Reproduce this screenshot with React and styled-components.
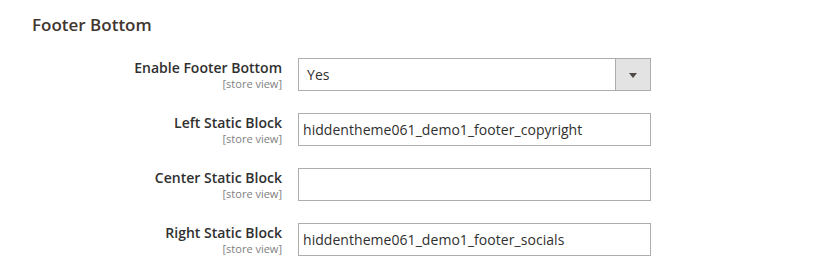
import React from 'react';
import styled, { createGlobalStyle } from 'styled-components';

const GlobalStyle = createGlobalStyle`
  body {
    margin: 0;
    background: #fff;
    font-family: "Open Sans", "Liberation Sans", sans-serif;
    color: #303030;
  }
`;

const Section = styled.div`
  padding: 13px 0 0 32px;
`;

const Title = styled.h3`
  margin: 0 0 22px;
  font-size: 17px;
  line-height: 23px;
  font-weight: 600;
  color: #41362f;
`;

const Fields = styled.div`
  display: flex;
  flex-direction: column;
  gap: 22px;
`;

const Row = styled.div`
  display: grid;
  grid-template-columns: 250px 353px;
  column-gap: 16px;
`;

const Label = styled.div`
  text-align: right;
`;

const LabelText = styled.div`
  font-size: 14px;
  line-height: 19px;
  font-weight: 600;
  color: #303030;
`;

const Scope = styled.div`
  font-size: 11px;
  line-height: 13px;
  color: #808080;
`;

const Input = styled.div`
  box-sizing: border-box;
  height: 33px;
  border: 1px solid #adadad;
  background: #fff;
  display: flex;
  align-items: center;
  padding-left: 4px;
  font-size: 14px;
  letter-spacing: 0.05px;
  color: #303030;
`;

const Select = styled(Input)`
  padding-left: 0;
`;

const SelectValue = styled.span`
  flex: 1;
  padding-left: 8px;
`;

const SelectButton = styled.span`
  width: 34px;
  height: 100%;
  border-left: 1px solid #adadad;
  background: #e3e3e3;
  display: flex;
  align-items: center;
  justify-content: center;
`;

const Arrow = styled.span`
  width: 0;
  height: 0;
  border-left: 4px solid transparent;
  border-right: 4px solid transparent;
  border-top: 5px solid #514943;
  margin-top: 1px;
`;

const fields = [
  { label: 'Enable Footer Bottom', value: 'Yes', select: true },
  { label: 'Left Static Block', value: 'hiddentheme061_demo1_footer_copyright' },
  { label: 'Center Static Block', value: '' },
  { label: 'Right Static Block', value: 'hiddentheme061_demo1_footer_socials' },
];

export default function App() {
  return (
    <>
      <GlobalStyle />
      <Section>
        <Title>Footer Bottom</Title>
        <Fields>
          {fields.map((f) => (
            <Row key={f.label}>
              <Label>
                <LabelText>{f.label}</LabelText>
                <Scope>[store view]</Scope>
              </Label>
              {f.select ? (
                <Select>
                  <SelectValue>{f.value}</SelectValue>
                  <SelectButton>
                    <Arrow />
                  </SelectButton>
                </Select>
              ) : (
                <Input>{f.value}</Input>
              )}
            </Row>
          ))}
        </Fields>
      </Section>
    </>
  );
}
